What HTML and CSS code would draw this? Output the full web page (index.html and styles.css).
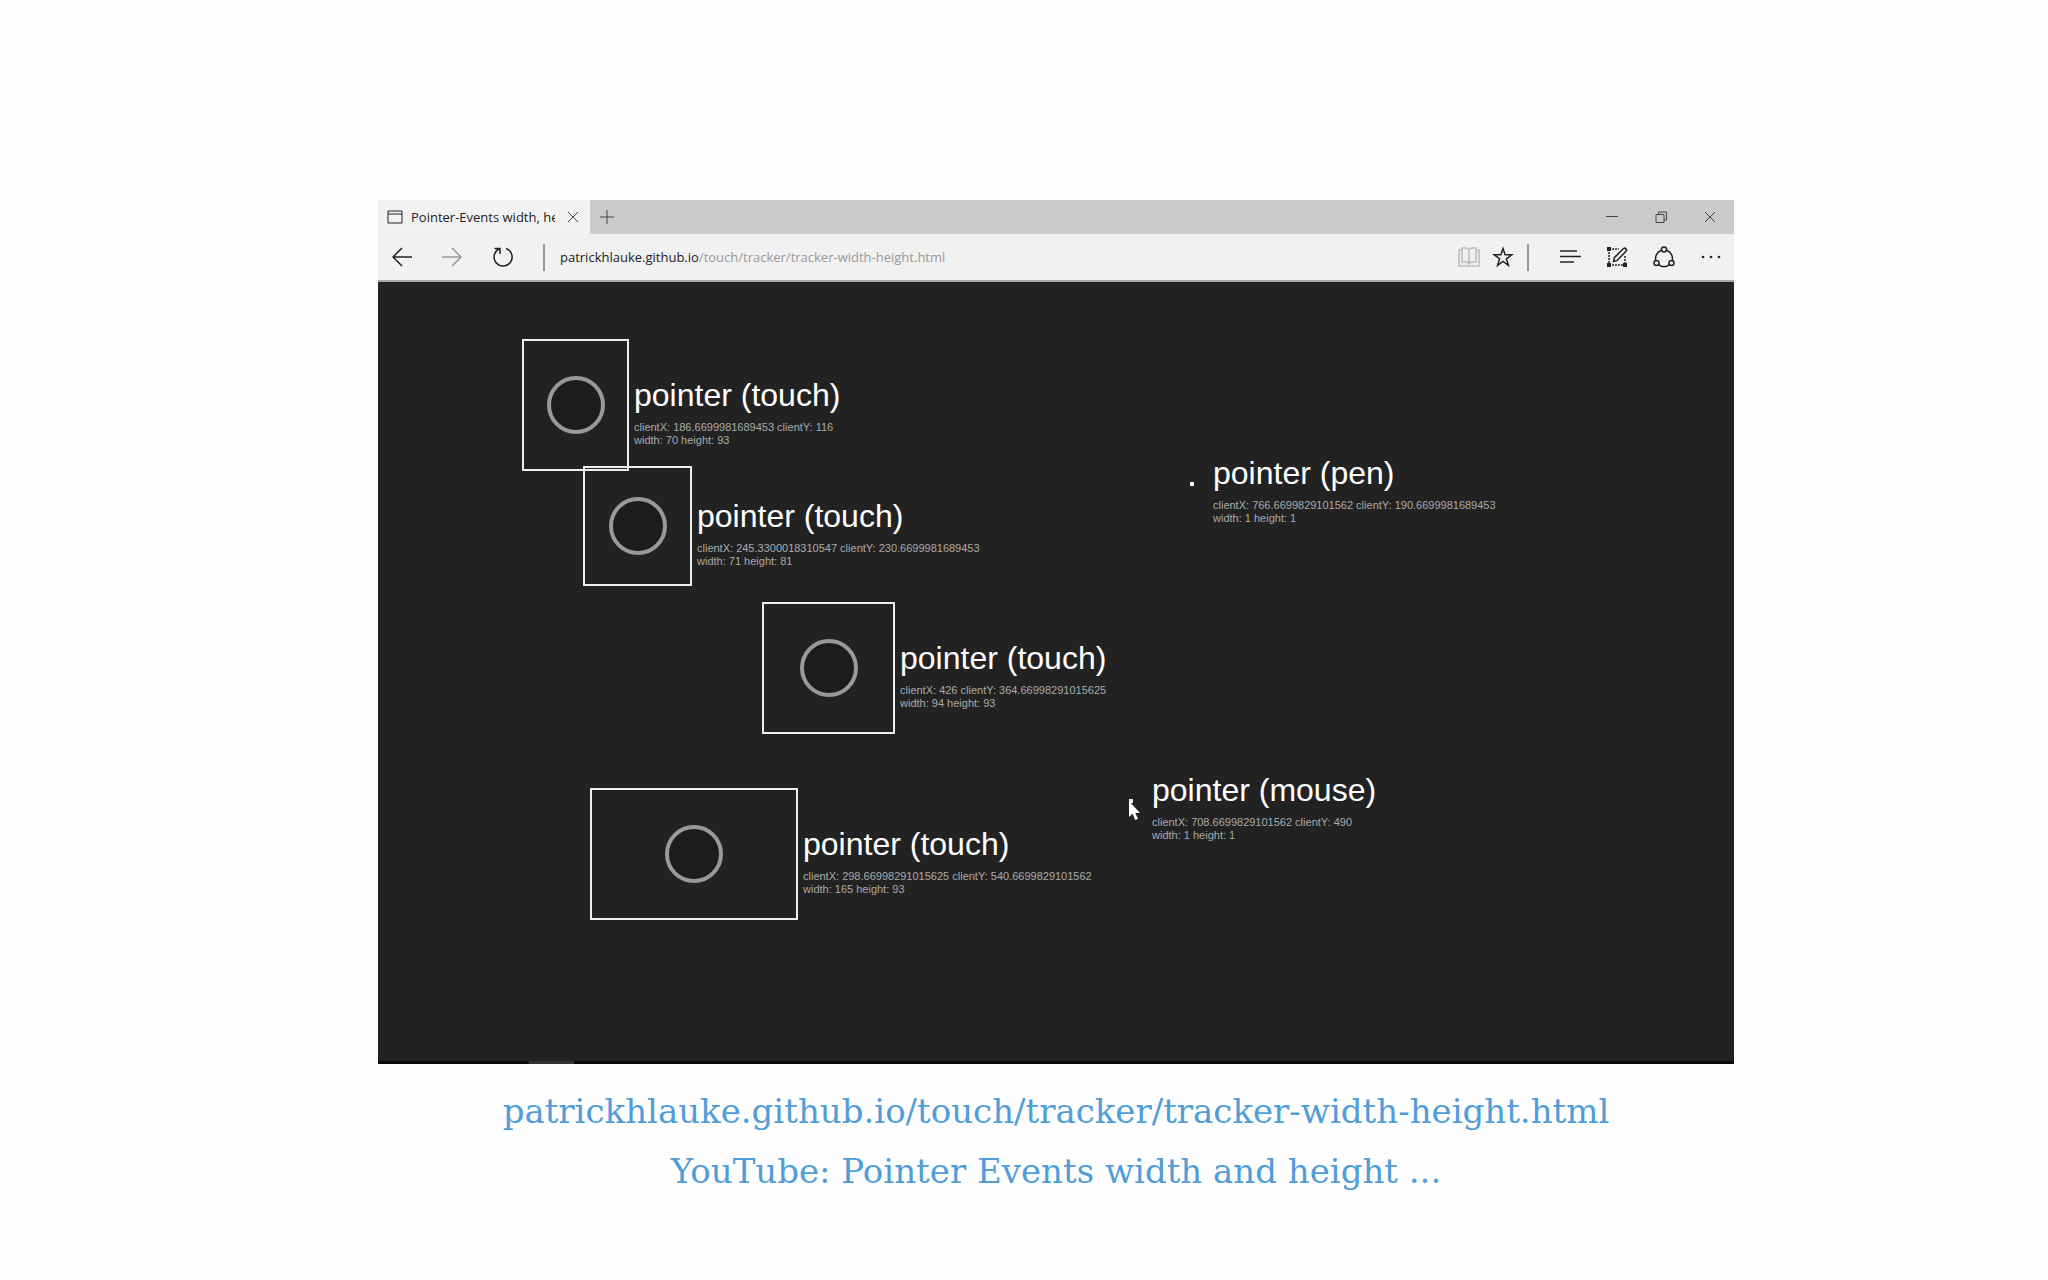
FILE: index.html
```html
<!DOCTYPE html>
<html lang="en">
<head>
  <meta charset="UTF-8" />
  <meta name="viewport" content="width=device-width, initial-scale=1.0"/>
  <title>Pointer Events width and height</title>
  <link rel="stylesheet" href="styles.css">
</head>
<body>

  <main class="slide">
    <div class="browser">

      <div class="tab-bar">
        <div class="tab">
          <svg class="tab-icon" width="16" height="14" viewBox="0 0 16 14"><path d="M1 1h14v12H1zM1 4h14"/></svg>
          <span class="tab-title">Pointer-Events width, height</span>
          <button class="tab-close" aria-label="Close tab">
            <svg width="12" height="12" viewBox="0 0 12 12"><path d="M1 1l10 10M11 1L1 11"/></svg>
          </button>
        </div>
        <button class="new-tab" aria-label="New tab">
          <svg width="16" height="16" viewBox="0 0 16 16"><path d="M8 1v14M1 8h14"/></svg>
        </button>
        <div class="window-controls">
          <button aria-label="Minimize"><svg width="12" height="12" viewBox="0 0 12 12"><path d="M0 5.500h12"/></svg></button>
          <button aria-label="Restore"><svg width="12" height="12" viewBox="0 0 12 12"><path d="M1 3.500h8v8H1zM3.500 3.500V1h8v8H9"/></svg></button>
          <button aria-label="Close"><svg width="12" height="12" viewBox="0 0 12 12"><path d="M1 1l10 10M11 1L1 11"/></svg></button>
        </div>
      </div>

      <div class="toolbar">
        <button class="nav-btn" aria-label="Back">
          <svg width="22" height="22" viewBox="0 0 22 22"><path d="M20 11H1M10 2l-9 9 9 9"/></svg>
        </button>
        <button class="nav-btn disabled" aria-label="Forward" disabled>
          <svg width="22" height="22" viewBox="0 0 22 22"><path d="M0 11h19M10 2l9 9-9 9"/></svg>
        </button>
        <button class="nav-btn" aria-label="Refresh">
          <svg width="22" height="22" viewBox="0 0 22 22"><path d="M14 2.500A9 9 0 1 1 7 3M2.500 2.500H8V8"/></svg>
        </button>
        <span class="separator"></span>
        <a class="address" href="#">patrickhlauke.github.io<span class="path">/touch/tracker/tracker-width-height.html</span></a>

        <button class="page-btn reading" aria-label="Reading view" disabled>
          <svg width="22" height="22" viewBox="0 0 22 22"><path d="M11 4v14M11 4Q10 2 7 2H4v14h4q2 0 3 2 1-2 3-2h4V2h-3q-3 0-4 2M4 4H1v16h20V4h-3"/></svg>
        </button>
        <button class="page-btn" aria-label="Add to favorites">
          <svg width="22" height="22" viewBox="0 0 22 22"><path d="M11 2.500l2.100 6.300h6.700l-5.400 4 2 6.500L11 15.400l-5.400 3.900 2-6.500-5.400-4h6.700z"/></svg>
        </button>
        <span class="separator"></span>
        <button class="tool-btn" aria-label="Hub">
          <svg width="22" height="22" viewBox="0 0 22 22"><path d="M1 5h17M1 10.500h21M1 16h14"/></svg>
        </button>
        <button class="tool-btn" aria-label="Make a web note">
          <svg width="22" height="22" viewBox="0 0 22 22">
            <path stroke-width="2" d="M2 2h2v2H2zM2 18h2v2H2zM18 18h2v2h-2z"/>
            <path stroke-dasharray="2 1" d="M6 3h7M3 6v11M6 19h11M19 10v7"/>
            <path d="M7.500 15.500l1-4 9-9q1.500-1 2.500.5t0 2.200l-8.800 9.200z"/>
          </svg>
        </button>
        <button class="tool-btn" aria-label="Share">
          <svg width="22" height="22" viewBox="0 0 22 22">
            <circle cx="11" cy="3.500" r="2.500"/><circle cx="3.500" cy="17" r="2.500"/><circle cx="18.500" cy="17" r="2.500"/>
            <path d="M8.400 4.300A8.800 8.800 0 0 0 2.700 14.500M13.600 4.300a8.800 8.800 0 0 1 5.700 10.200M5.600 18.700q5.400 4.300 10.800 0"/>
          </svg>
        </button>
        <button class="tool-btn more" aria-label="More">
          <svg width="22" height="22" viewBox="0 0 22 22"><circle cx="3" cy="11" r="1.300"/><circle cx="11" cy="11" r="1.300"/><circle cx="19" cy="11" r="1.300"/></svg>
        </button>
      </div>

      <!-- pointers sit where they touched the canvas -->
      <div class="canvas">
        <div class="pointer touch-1">
          <div class="contact"><div class="ring"></div></div>
          <div class="label">
            <p class="type">pointer (touch)</p>
            <p class="data">clientX: 186.6699981689453 clientY: 116<br>width: 70 height: 93</p>
          </div>
        </div>
        <div class="pointer touch-2">
          <div class="contact"><div class="ring"></div></div>
          <div class="label">
            <p class="type">pointer (touch)</p>
            <p class="data">clientX: 245.3300018310547 clientY: 230.6699981689453<br>width: 71 height: 81</p>
          </div>
        </div>
        <div class="pointer touch-3">
          <div class="contact"><div class="ring"></div></div>
          <div class="label">
            <p class="type">pointer (touch)</p>
            <p class="data">clientX: 426 clientY: 364.66998291015625<br>width: 94 height: 93</p>
          </div>
        </div>
        <div class="pointer touch-4">
          <div class="contact"><div class="ring"></div></div>
          <div class="label">
            <p class="type">pointer (touch)</p>
            <p class="data">clientX: 298.66998291015625 clientY: 540.6699829101562<br>width: 165 height: 93</p>
          </div>
        </div>
        <div class="pointer fine pen">
          <div class="contact"></div>
          <div class="label">
            <p class="type">pointer (pen)</p>
            <p class="data">clientX: 766.6699829101562 clientY: 190.6699981689453<br>width: 1 height: 1</p>
          </div>
        </div>
        <div class="pointer fine mouse">
          <div class="contact"></div>
          <div class="label">
            <p class="type">pointer (mouse)</p>
            <p class="data">clientX: 708.6699829101562 clientY: 490<br>width: 1 height: 1</p>
          </div>
        </div>
        <svg class="cursor" width="13" height="20" viewBox="0 0 13 20"><path d="M1 0v16l3.500-3.300L7.300 19l2.700-1.200L7.300 12H12z"/></svg>
      </div>

      <div class="taskbar"><span class="task"></span></div>
    </div>

    <p class="links">
      <a href="#">patrickhlauke.github.io/touch/tracker/tracker-width-height.html</a>
      <a href="#">YouTube: Pointer Events width and height ...</a>
    </p>
  </main>

</body>
</html>
```
FILE: styles.css
```css
body {
  margin: 0;
  background: #fefefe;
  font-family: "Open Sans", sans-serif;
}

.slide {
  padding: 200px 314px 40px 378px;
}

.browser {
  background: #f1f1f1;
}

button {
  display: flex;
  align-items: center;
  justify-content: center;
  padding: 0;
  border: none;
  background: none;
  color: #222;
  cursor: pointer;
}

svg {
  display: block;
  flex: none;
  fill: none;
  stroke: currentColor;
  stroke-width: 1;
}

/* tabs */
.tab-bar {
  display: flex;
  height: 34px;
  background: #cbcbcb;
}

.tab {
  display: flex;
  align-items: center;
  box-sizing: border-box;
  width: 212px;
  padding: 0 11px 0 9px;
  background: #f2f2f2;
  color: #222;
}

.tab-title {
  flex: 1;
  margin: 0 12px 0 8px;
  overflow: hidden;
  white-space: nowrap;
  font-size: 13px;
}

.tab-close,
.new-tab,
.window-controls button {
  color: #444;
}

.new-tab {
  width: 34px;
}

.window-controls {
  display: flex;
  margin-left: auto;
}

.window-controls button {
  width: 49px;
}

/* toolbar */
.toolbar {
  display: flex;
  align-items: center;
  height: 46px;
  border-bottom: 2px solid #aaa;
}

.toolbar svg {
  stroke-width: 1.5;
}

.nav-btn {
  width: 50px;
}

.toolbar .disabled {
  color: #999;
}

.toolbar .reading {
  color: #bbb;
}

.separator {
  width: 2px;
  height: 27px;
  margin: 0 15px;
  background: #999;
}

.address {
  flex: 1;
  color: #222;
  font-size: 13px;
  text-decoration: none;
  white-space: nowrap;
}

.path {
  color: #999;
}

.page-btn {
  width: 34px;
}

.page-btn + .separator {
  margin: 0 17px 0 7px;
}

.tool-btn {
  width: 47px;
}

.toolbar .more svg {
  fill: currentColor;
  stroke: none;
}

/* canvas */
.canvas {
  position: relative;
  height: 779px;
  overflow: hidden;
  background: #222;
  font-family: "Liberation Sans", Arial, sans-serif;
}

.pointer {
  position: absolute;
  display: flex;
  align-items: center;
  gap: 5px;
  white-space: nowrap;
}

.contact {
  display: flex;
  align-items: center;
  justify-content: center;
  box-sizing: border-box;
  border: 2px solid #eee;
}

.ring {
  box-sizing: border-box;
  width: 58px;
  height: 58px;
  border: 4px solid #999;
  border-radius: 50%;
  background: #1c1c1c;
}

.label {
  padding-top: 13px;
}

.type {
  margin: 0 0 8px;
  color: #fff;
  font-size: 32px;
  line-height: 36px;
}

.data {
  margin: 0;
  color: #aaa;
  font-size: 11px;
  line-height: 13px;
}

.touch-1 {
  left: 144px;
  top: 57px;
}

.touch-1 .contact {
  width: 107px;
  height: 132px;
}

.touch-2 {
  left: 205px;
  top: 184px;
}

.touch-2 .contact {
  width: 109px;
  height: 120px;
}

.touch-3 {
  left: 384px;
  top: 320px;
}

.touch-3 .contact {
  width: 133px;
  height: 132px;
}

.touch-4 {
  left: 212px;
  top: 506px;
}

.touch-4 .contact {
  width: 208px;
  height: 132px;
}

.fine {
  gap: 19px;
}

.fine .contact {
  width: 4px;
  height: 4px;
}

.pen {
  left: 812px;
  top: 160px;
}

.mouse {
  left: 751px;
  top: 477px;
}

.cursor {
  position: absolute;
  left: 750px;
  top: 519px;
  fill: #fff;
  stroke: none;
}

.taskbar {
  display: flex;
  height: 3px;
  background: #0d0d0d;
}

.task {
  width: 45px;
  margin-left: 151px;
  background: #333;
}

/* links */
.links {
  display: flex;
  flex-direction: column;
  align-items: center;
  margin: 17px 0 0;
  font-family: "Roboto Slab", "DejaVu Serif", serif;
  font-size: 34px;
  line-height: 60px;
}

.links a {
  color: #519dd9;
  text-decoration: none;
}
```
